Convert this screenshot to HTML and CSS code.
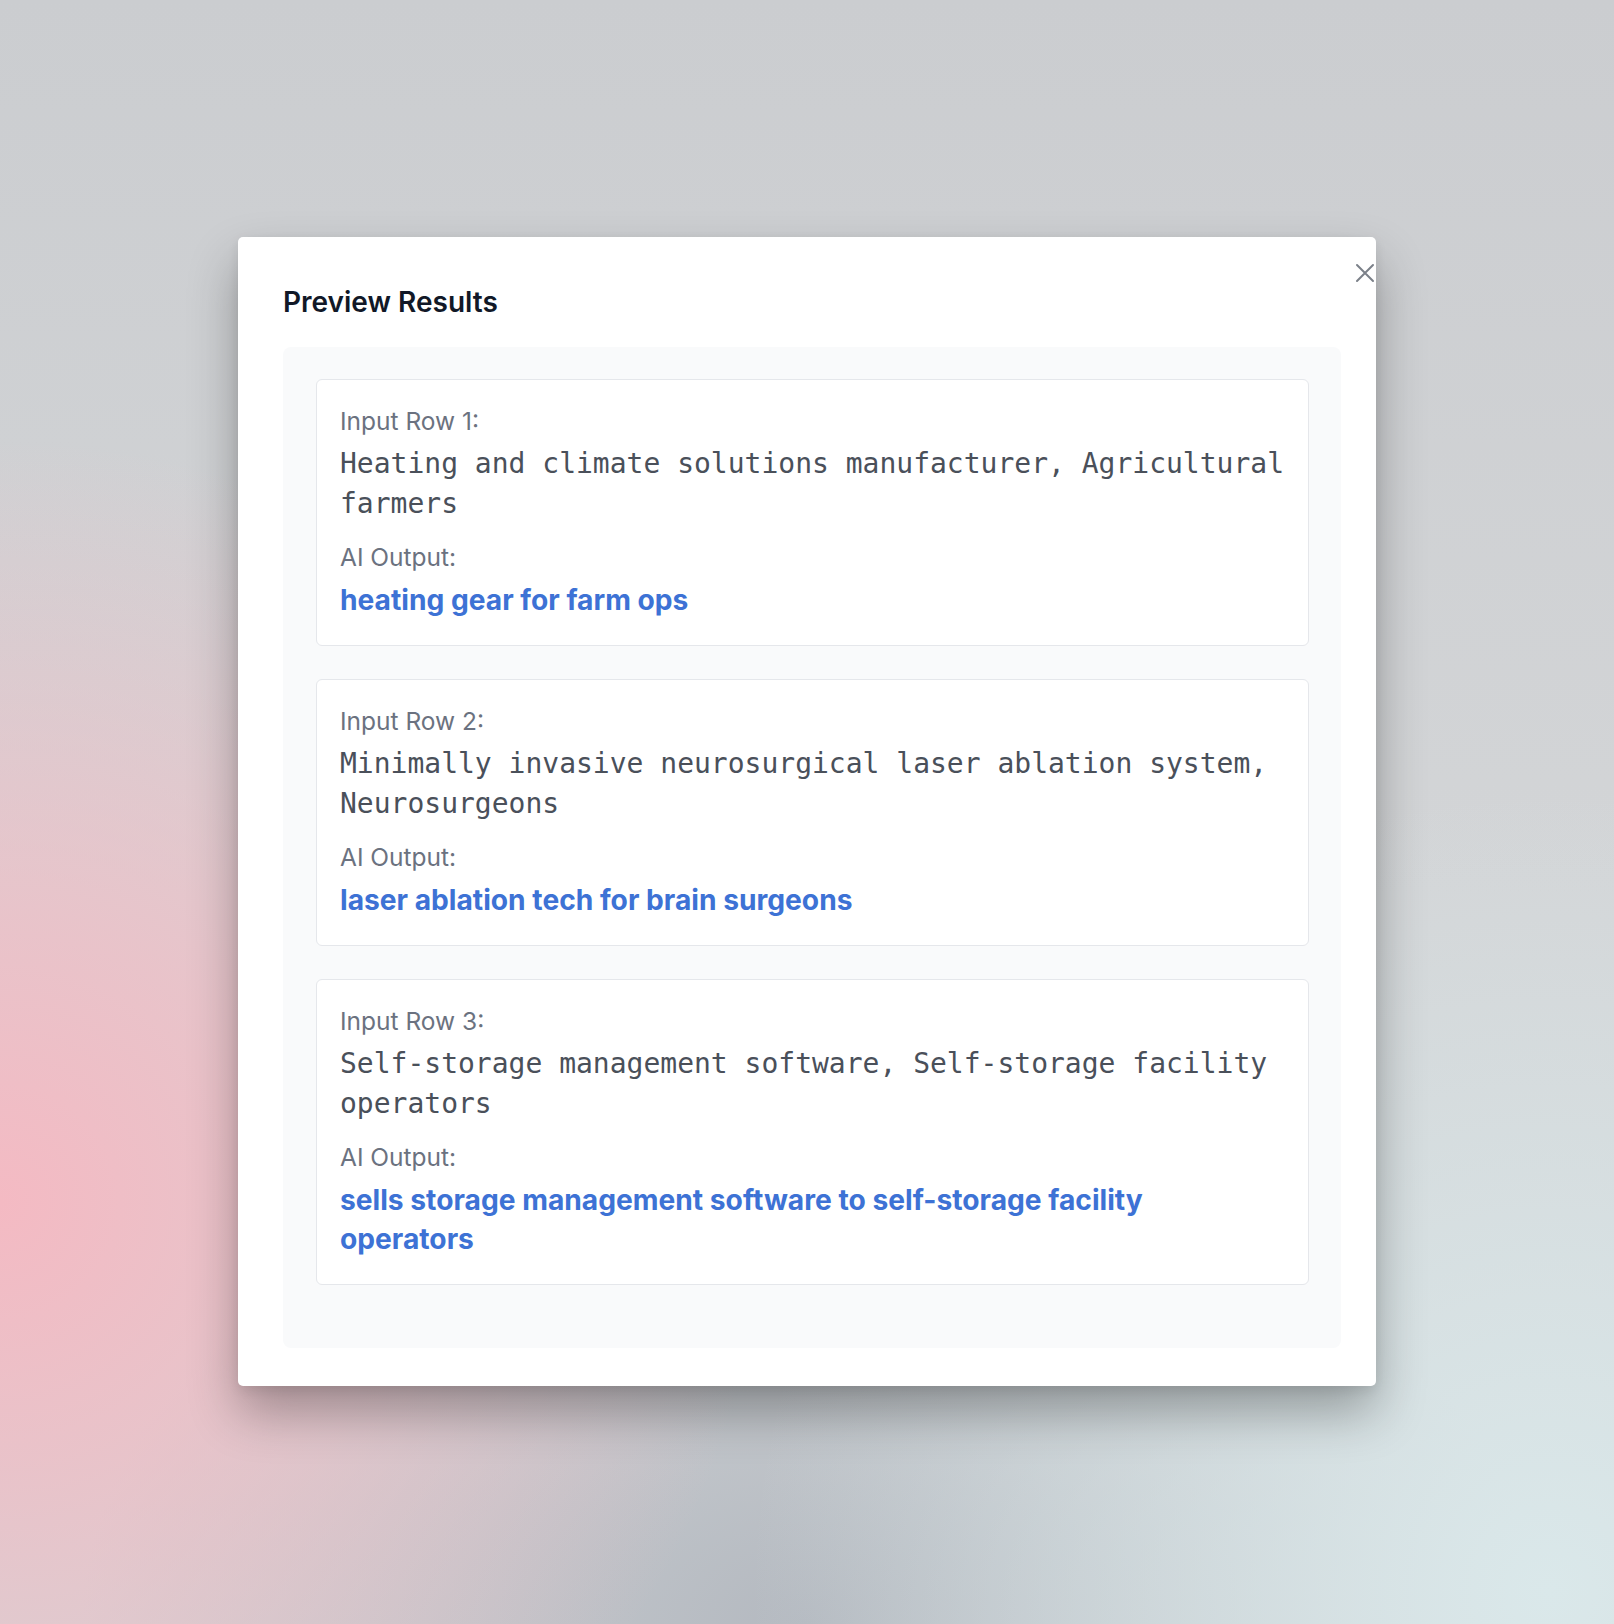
FILE: index.html
```html
<!DOCTYPE html>
<html lang="en">
<head>
    <meta charset="UTF-8">
    <meta name="viewport" content="width=device-width, initial-scale=1.0">
    <title>Preview Results</title>
    <link rel="stylesheet" href="styles.css">
</head>
<body>

    <!-- Modal -->
    <div class="modal">
        <button class="close-btn" aria-label="Close">
            <svg width="20" height="20" viewBox="0 0 20 20" fill="none" stroke="#7b8089" stroke-width="2" stroke-linecap="round">
                <path d="M2 2L18 18M18 2L2 18"/>
            </svg>
        </button>

        <h2 class="modal-title">Preview Results</h2>

        <div class="results">
            <div class="result-card">
                <div class="label">Input Row 1:</div>
                <div class="input-text">Heating and climate solutions manufacturer, Agricultural farmers</div>
                <div class="label label-output">AI Output:</div>
                <div class="output-text">heating gear for farm ops</div>
            </div>

            <div class="result-card">
                <div class="label">Input Row 2:</div>
                <div class="input-text">Minimally invasive neurosurgical laser ablation system, Neurosurgeons</div>
                <div class="label label-output">AI Output:</div>
                <div class="output-text">laser ablation tech for brain surgeons</div>
            </div>

            <div class="result-card">
                <div class="label">Input Row 3:</div>
                <div class="input-text">Self-storage management software, Self-storage facility operators</div>
                <div class="label label-output">AI Output:</div>
                <div class="output-text">sells storage management software to self-storage facility operators</div>
            </div>
        </div>
    </div>

</body>
</html>
```

FILE: styles.css
```css
/* Reset styles */
* {
    margin: 0;
    padding: 0;
    box-sizing: border-box;
}

body {
    min-height: 1624px;
    padding: 237px 0 0 238px;
    font-family: 'Inter', 'Noto Sans', sans-serif;
    background:
        radial-gradient(circle at 0% 74%, rgba(244, 186, 195, 1) 0, rgba(244, 186, 195, 0.65) 14%, rgba(244, 186, 195, 0) 38%),
        radial-gradient(circle at 96% 98%, rgba(218, 232, 234, 1) 0, rgba(218, 232, 234, 0) 36%),
        radial-gradient(ellipse 45% 30% at 50% 100%, rgba(180, 185, 192, 1) 0, rgba(180, 185, 192, 0) 100%),
        linear-gradient(180deg, #cbcdd0 0%, #d3d5d7 55%, #d2d5d7 100%);
}

/* Modal */
.modal {
    position: relative;
    width: 1138px;
    padding: 47px 35px 38px 45px;
    background: #fff;
    border-radius: 5px;
    box-shadow: 0 26px 50px rgba(0, 0, 0, 0.3), 0 4px 12px rgba(0, 0, 0, 0.08);
}

.close-btn {
    position: absolute;
    top: 26px;
    right: 0;
    width: 22px;
    height: 22px;
    border: none;
    background: none;
    cursor: pointer;
}

.modal-title {
    font-size: 28px;
    line-height: 36px;
    font-weight: 600;
    color: #111827;
    margin-bottom: 27px;
}

/* Results panel */
.results {
    display: flex;
    flex-direction: column;
    gap: 33px;
    padding: 32px 32px 63px 33px;
    background: #f9fafb;
    border-radius: 8px;
}

.result-card {
    padding: 23px 14px 25px 23px;
    background: #fff;
    border: 1px solid #e5e7eb;
    border-radius: 6px;
}

.label {
    font-size: 24.5px;
    line-height: 36px;
    color: #6b7280;
}

.label-output {
    margin-top: 15px;
}

.input-text {
    margin-top: 5px;
    font-family: 'DejaVu Sans Mono', monospace;
    font-size: 28px;
    line-height: 40px;
    color: #4a505a;
}

.output-text {
    margin-top: 6px;
    padding-right: 120px;
    font-size: 28.2px;
    line-height: 39px;
    font-weight: 700;
    color: #3d72d5;
}
```
